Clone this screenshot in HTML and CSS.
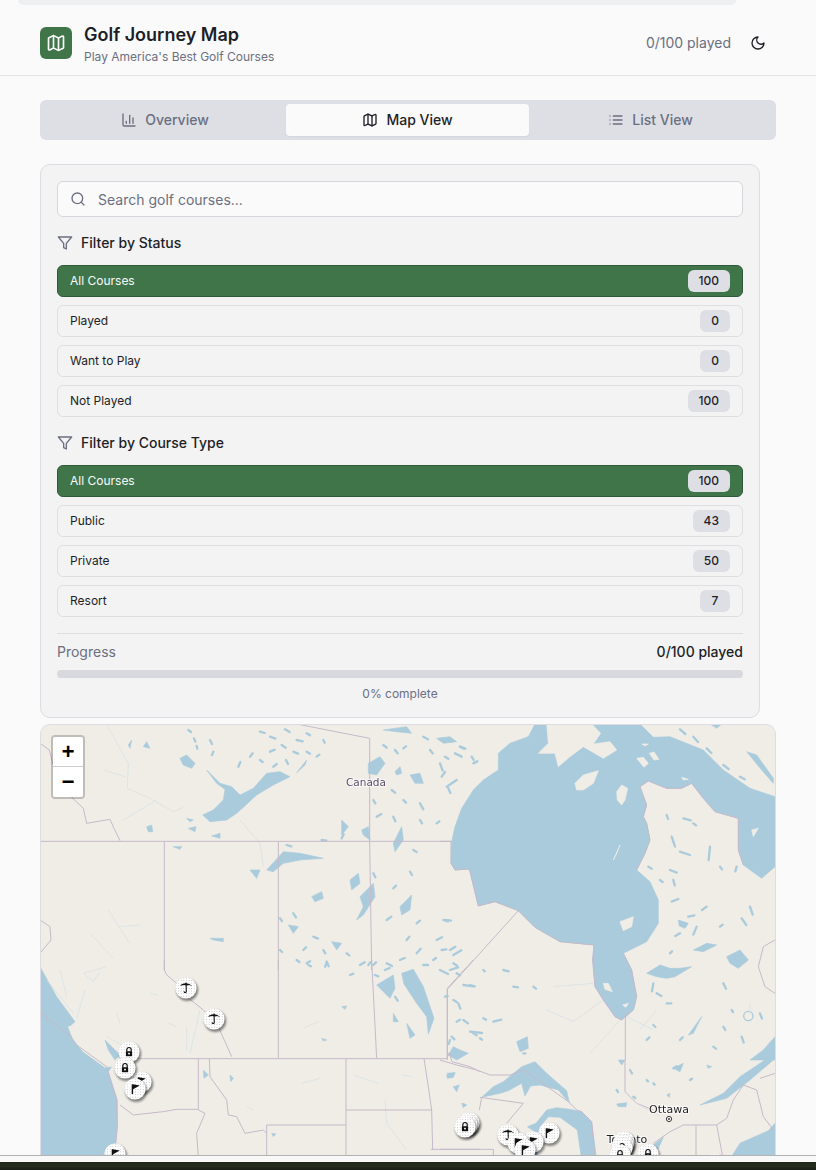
FILE: index.html
```html
<!DOCTYPE html>
<html>
  <head>
    <meta charset="UTF-8">
    <meta name="viewport" content="width=device-width,initial-scale=1">
    <title>Golf Journey Map</title>
    <link rel="stylesheet" href="styles.css">
  </head>
  <body>
    <svg class="defs" width="0" height="0">
      <symbol id="i-map" viewBox="0 0 24 24"><path d="M14.106 5.553a2 2 0 0 0 1.788 0l3.659-1.83A1 1 0 0 1 21 4.619v12.764a1 1 0 0 1-.553.894l-4.553 2.277a2 2 0 0 1-1.788 0l-4.212-2.106a2 2 0 0 0-1.788 0l-3.659 1.83A1 1 0 0 1 3 19.381V6.618a1 1 0 0 1 .553-.894l4.553-2.277a2 2 0 0 1 1.788 0z"/><path d="M15 5.764v15"/><path d="M9 3.236v15"/></symbol>
      <symbol id="i-moon" viewBox="0 0 24 24"><path d="M12 3a6 6 0 0 0 9 9 9 9 0 1 1-9-9Z"/></symbol>
      <symbol id="i-chart" viewBox="0 0 24 24"><path d="M3 3v16a2 2 0 0 0 2 2h16"/><path d="M18 17V9"/><path d="M13 17V5"/><path d="M8 17v-3"/></symbol>
      <symbol id="i-list" viewBox="0 0 24 24"><path d="M3 12h.01"/><path d="M3 18h.01"/><path d="M3 6h.01"/><path d="M8 12h13"/><path d="M8 18h13"/><path d="M8 6h13"/></symbol>
      <symbol id="i-search" viewBox="0 0 24 24"><circle cx="11" cy="11" r="8"/><path d="m21 21-4.3-4.3"/></symbol>
      <symbol id="i-filter" viewBox="0 0 24 24"><polygon points="22 3 2 3 10 12.46 10 19 14 21 14 12.46 22 3"/></symbol>
    </svg>

    <div class="topstrip"></div>

    <header class="header">
      <div class="brand">
        <div class="logo"><svg class="icon icon-20"><use href="#i-map"/></svg></div>
        <div>
          <h1>Golf Journey Map</h1>
          <p>Play America's Best Golf Courses</p>
        </div>
      </div>
      <div class="header-right">
        <span>0/100 played</span>
        <svg class="icon icon-16 dark"><use href="#i-moon"/></svg>
      </div>
    </header>

    <main class="main">
      <nav class="tabs">
        <div class="tab"><svg class="icon icon-16"><use href="#i-chart"/></svg><span>Overview</span></div>
        <div class="tab active"><svg class="icon icon-16"><use href="#i-map"/></svg><span>Map View</span></div>
        <div class="tab"><svg class="icon icon-16"><use href="#i-list"/></svg><span>List View</span></div>
      </nav>

      <section class="card">
        <div class="search">
          <svg class="icon icon-16"><use href="#i-search"/></svg>
          <span>Search golf courses...</span>
        </div>

        <div class="filter-title"><svg class="icon icon-16"><use href="#i-filter"/></svg><span>Filter by Status</span></div>
        <div class="filter-list">
          <div class="filter selected"><span>All Courses</span><b>100</b></div>
          <div class="filter"><span>Played</span><b>0</b></div>
          <div class="filter"><span>Want to Play</span><b>0</b></div>
          <div class="filter"><span>Not Played</span><b>100</b></div>
        </div>

        <div class="filter-title"><svg class="icon icon-16"><use href="#i-filter"/></svg><span>Filter by Course Type</span></div>
        <div class="filter-list">
          <div class="filter selected"><span>All Courses</span><b>100</b></div>
          <div class="filter"><span>Public</span><b>43</b></div>
          <div class="filter"><span>Private</span><b>50</b></div>
          <div class="filter"><span>Resort</span><b>7</b></div>
        </div>

        <div class="progress">
          <div class="progress-row"><span>Progress</span><strong>0/100 played</strong></div>
          <div class="bar"></div>
          <div class="percent">0% complete</div>
        </div>
      </section>

      <section class="map">
        <svg class="map-art" viewBox="41 725 734 446" width="734" height="446">
          <defs>
            <pattern id="dots" width="2.6" height="2.6" patternUnits="userSpaceOnUse">
              <rect width=".8" height=".8" fill="#b4b4b4"/>
            </pattern>
            <filter id="soft" x="-40%" y="-40%" width="180%" height="180%"><feGaussianBlur stdDeviation="1"/></filter>
            <g id="disc">
              <circle cx="1.2" cy="2" r="11" fill="#000" opacity=".45" filter="url(#soft)"/>
              <circle r="10.6" fill="#fff"/>
              <circle r="10.6" fill="url(#dots)"/>
            </g>
            <g id="m-lock">
              <use href="#disc"/>
              <path d="M-2.2-.6v-1.7a2.2 2.2 0 0 1 4.4 0v1.7" fill="none" stroke="#111" stroke-width="1.2"/>
              <rect x="-3.1" y="-.8" width="6.2" height="5" fill="#111"/>
              <rect x="-1" y=".8" width="2" height="1.6" fill="#ddd"/>
            </g>
            <g id="m-flag">
              <use href="#disc"/>
              <path d="M-2.6-4.6v9.6" stroke="#111" stroke-width="1.4"/>
              <path d="M-2.4-4.8 4.8-3.4-2.4.4z" fill="#111"/>
            </g>
            <g id="m-umb">
              <use href="#disc"/>
              <path d="M-6-2.2C-4-5.6 3-6 6.2-1.8L3.4-3 .8-2.4-1.8-3z" fill="#111"/>
              <path d="M0-5.4.3 3.2C.3 5-1.8 5-2 3.4" fill="none" stroke="#111" stroke-width="1.1"/>
            </g>
          </defs>

          <rect x="41" y="725" width="734" height="446" fill="#f0ede7"/>

          <!-- hudson bay and the east, coords from the 3x crop -->
          <g transform="translate(440 720) scale(.33333)">
            <path class="water" d="M285 12L265 50 210 70 175 100 175 150 130 180 100 210 65 265 45 320 35 365 33 430 45 450 88 447 115 558 165 545 235 572 285 622 360 665 462 675 458 720 465 800 490 840 525 890 545 900 580 870 590 830 575 750 550 700 620 665 655 610 655 540 630 485 590 450 615 400 630 360 620 310 610 290 620 255 600 200 625 183 680 205 725 205 755 190 790 235 825 275 895 295 895 390 910 435 965 475 1005 440 1005 230 930 205 850 150 790 90 690 50 640 52 600 12z"/>
            <path class="border" d="M33 365V430L45 450 88 447 115 558 165 545 235 572 285 622 360 665 462 675 458 720 465 800 490 840 525 890 545 900 580 870 590 830 575 750 550 700M590 450L615 400 630 360 620 310 610 290 620 255 600 200 625 183 680 205 725 205 755 190 790 235 825 275 895 295 895 390 910 435M0 364H33M235 572L22 808V1020M556 880V1020M1005 660L970 680 955 740 975 800 1005 820"/>
            <path class="land" d="M320 12L325 70 295 100 345 100 355 140 390 110 430 80 490 115 530 90 510 65 460 72 482 40 455 12zM405 190L430 165 475 152 460 190 430 210 410 210zM530 215L545 195 563 205 555 240 545 255 532 240zM590 115L610 112 625 130 612 142zM628 100L642 96 657 118 642 120zM605 72L625 72 615 78zM490 790L505 790 517 815 495 808zM935 330L955 325 940 350zM725 172L745 178 730 180zM548 855L565 850 558 862zM540 605L580 590 575 620 550 632zM520 420L540 375 530 400z"/>
            <path class="water" d="M920 95L950 105 1000 175V190L965 150zM810 12H845L830 25zM1005 950L1005 1020H930L970 990zM620 760L660 735 690 745 720 745 755 740 705 770 680 775 650 770zM760 690L800 670 830 675 790 695zM860 710L900 690 925 720 895 745 870 730zM715 600L745 610 735 625 718 618zM745 945L785 890 760 940zM230 965L262 950 265 985 240 995z"/>
            <path class="lakes" d="M680 285l4 12M695 350l10 30M730 295l22 6M720 395l30 10M760 310l8 6M810 380l-4 40M690 450l20 8M700 480l4 16M695 545l20-8M745 590l18-4M770 620l-10 24M890 440l-4 14M625 440l10 6M660 480l8 6M840 440l6 8M720 640l-14 8M850 790l8 16M800 560l-14 10M930 560l8 24M905 595l14 20M840 620l8-6M640 790l-4 24M650 820l14 8M680 850l14 0M620 960l8-8M640 915l6 6M720 960l8-8M850 920l6 10M905 950l6 18M960 880l6 16M875 870l4 6M820 980l8 6M690 700l6-6M15 600l18 2M5 690l14-2M30 750l24-8M40 705l24-14M190 750l16 4M70 795l30 4M130 750l4 4M160 905l24-6M90 935l36 4M120 955l6 4M280 800l8 6M220 800l14 2M50 905l10-6M15 830l8-2M30 960l-4 12M250 1000l6 0M20 200l30-20M0 130l8 22M45 100l20 10M100 130l12-6M60 80l16 6M20 60l14 4M130 895l8 4M720 28l16 14M760 50l14 16M800 85l14 14M850 135l16 12M900 170l14 8"/>
            <circle class="lake-ring" cx="925" cy="888" r="14"/>
            <path class="river" d="M320 870L400 905 490 840M340 800L460 790M540 900L450 1000M560 890L640 930M930 850V880M600 930L650 870"/>
          </g>

          <!-- prairie and northern lakes -->
          <g transform="translate(40 720) scale(.33333)">
            <path class="water" d="M500 150L530 190 555 208 550 240 520 270 488 285 510 305 560 300 590 280 612 260 650 225 700 195 750 170 720 155 680 160 640 205 600 225 575 200 540 190zM420 115L440 105 465 130 455 145 430 135zM985 130L1020 110 1035 130 1010 165 985 160zM1065 155L1080 140 1085 160 1070 165zM1110 165L1140 160 1150 190 1125 190zM1190 55L1230 50 1250 65 1210 70zM1030 30L1100 20 1115 40 1070 35zM680 450L730 395 780 400 850 415 780 420 730 430 700 455zM630 450L660 450 650 475zM960 530L1000 490 1005 530 970 585 950 600 970 560zM930 480L955 460 960 490 935 510zM815 530L845 515 850 535 825 545zM510 655L550 655 550 665 520 660zM745 615L775 620 760 640zM875 665L905 670 890 690zM310 80L320 65 330 85zM265 75L275 60 270 85zM320 320L335 315 338 335 325 335zM445 325L468 320 465 335zM515 348L540 340 540 355zM400 380L425 380 420 388zM440 295L460 300 450 305zM965 330L985 320 990 360 970 345zM1060 370L1085 320 1090 360 1065 395zM905 300L925 320 905 345zM1080 560L1115 525 1110 570 1085 585zM770 158L800 120 795 135z"/>
            <path class="lakes" d="M445 30l8 6M462 55l4 10M470 78l2 8M510 60l6 12M520 95l-4 10M595 140l6-14M630 110l8-10M660 35l14 4M690 50l16 6M735 28l14 8M770 60l18 4M800 40l10 6M690 95l14-6M725 75l12 8M760 95l14 6M800 95l10 6M830 110l8-6M660 120l8 6M700 140l10-8M738 120l6 12M850 60l4 8M1030 75l10 8M1065 90l8 10M1090 85l8-6M1150 50l14 8M1170 90l8 10M1215 110l10 6M1260 80l12 6M1295 110l6 10M1055 210l10 8M1090 240l8 8M1140 250l10 18M1205 170l10-14M1225 205l6 14M1010 290l14-8M1060 290l6 14M1140 300l6 10M1190 310l8-6M1000 240l6 10M1080 340l-10 30M1120 390l10 6M1110 455l6 10M740 375l14 4M845 360l14 2M905 355l6-12M760 580l8 12M720 595l6 8M820 650l14 6M790 690l8-8M850 690l6 10M770 720l8 6M720 690l6 6M800 730l10-6M860 725l6 14M920 700l8 6M960 735l14-8M1040 730l16 8M1080 720l14-6M1130 700l12-14M1180 720l8-6M1230 690l16-10M1130 610l10-8M1040 600l14-10M1190 660l16-8M1100 660l8-10M1060 505l8-8M1000 460l6 12M1210 600l14 4M1150 735l14 0"/>
            <path class="river" d="M200 15L265 130 262 205 330 235 400 275 430 262M190 150L255 170M205 570L240 625 270 670M240 620L300 615M150 640L220 715M600 300L660 370 670 440M350 240L250 300"/>
            <path class="border" d="M0 70L28 90 38 130 95 232 130 265 140 310 210 298 222 325 240 362M770 12L989 55V364L995 750M0 364H1235M373 364V750M715 364V750M0 600L30 620 33 660 0 700"/>
          </g>

          <!-- pacific coast and the border -->
          <g transform="translate(40 960) scale(.33333)">
            <path class="water" d="M0 20L50 110 105 185 88 200 130 220 215 320 205 335 232 420 232 500 222 600H0z"/>
            <path class="land" d="M85 200L115 197 170 255 222 318 195 322 130 275 100 240z"/>
            <path class="water" d="M1085 40L1120 28 1150 80 1182 175 1165 222 1160 170 1130 130 1092 72zM1100 190L1125 225 1110 235zM1010 75L1060 45 1065 85 1050 115 1030 95zM1260 270L1285 280 1250 300 1225 285 1240 260zM1220 345L1245 338 1240 352 1222 355zM1240 380L1258 375 1250 395zM1270 430L1280 435 1270 442zM905 140L920 138 915 148zM845 235L860 240 850 243zM570 345L580 355 572 365zM490 330L505 345 492 355zM1060 160L1075 185 1060 185zM695 520L708 522 700 530zM195 240L240 285 225 300 205 270z"/>
            <path class="lakes" d="M1005 45l10 4M1035 30l14-6M1065 110l8 12M1000 15l8-8M1200 30l24 12M1250 40l10 6M1290 75l14 4M1240 120l10 6M1270 180l14 10M1300 220l10 6M1235 230l8 8M1255 130l6 16M805 15l8 4M855 20l6-14M930 45l10-4M985 15l6-8M1240 10l12 8"/>
            <path class="river" d="M60 30L80 110M130 40L200 20M130 40L160 65 180 35M20 60L100 160M135 90L110 175M330 100L355 105M480 150L450 280M440 200L440 270M385 190L410 200M940 345L1015 370M1035 420L1040 490 1100 570M785 370L840 355M790 205L835 185M1085 345L1115 350M200 230L290 280M230 160L240 190M620 440L640 450"/>
            <path class="border" d="M373 0V30L380 45 410 70 440 110 490 150 530 190 555 245 575 290M715 0V295M995 0L1010 295M1300 0L1222 85V295M295 296H1220L1228 278 1236 305 1290 320 1320 335M0 158L60 205 90 225 110 255 200 320 205 340 230 420 232 500 222 600M475 296V450L495 460 470 520 475 590M508 296L510 350 560 420 565 465 590 470 615 520 670 510 680 520M680 495H918M680 495V590M918 296V590M918 450H1175M1152 296L1165 380 1175 450 1178 570M1172 568H1320M240 435L280 465 370 455 410 448H475"/>
          </g>

          <!-- great lakes and st lawrence -->
          <g transform="translate(440 1060) scale(.33333)">
            <path class="water" d="M125 112L160 80 190 65 245 20 285 5 320 40 380 92 388 128 355 90 300 75 272 78 255 108 245 70 205 92 180 100zM288 190L320 150 350 143 390 148 425 155 455 185 470 300H425L412 210 360 172 325 170 300 200 290 300H268L292 220 262 200zM600 300L640 255 670 232 640 300zM780 135L850 100 900 50 975 0H1000L930 60 860 115zM868 300L900 250 985 212 1005 190V300zM530 132L560 128 558 140 535 140zM20 40L45 38 35 52zM700 25L730 10 720 35zM800 15L815 20 805 25zM65 130L78 135 70 142zM680 105L690 100 688 112zM535 0H555L545 15z"/>
            <path class="border" d="M0 0L50 15 110 30 150 45 210 45 252 30 385 125 410 150 425 155 455 185 465 290M125 112L118 150M120 112L250 130 200 190M640 250L690 215 730 195H830L860 175 880 120 910 75 950 90 970 170 1000 210M1005 40L960 55M768 195V290M830 195L848 290M555 0V95L590 130 640 150M0 268H160V300"/>
            <path class="lakes" d="M570 30l6 10M620 60l4 4M700 25l10-6M530 90l4 6M580 110l6 4M640 70l4 4M750 60l6-4"/>
            <path class="river" d="M590 130L660 170"/>
          </g>

          <text class="label label-country" x="366" y="786">Canada</text>
          <text class="label label-city" x="669" y="1113">Ottawa</text>
          <text class="label label-city" x="627" y="1143">Toronto</text>
          <circle cx="669" cy="1119" r="2.6" fill="#fff" stroke="#222" stroke-width=".9"/>
          <circle cx="669" cy="1119" r=".9" fill="#222"/>

          <use href="#m-umb" x="186" y="988"/>
          <use href="#m-umb" x="214" y="1019"/>
          <use href="#m-lock" x="129" y="1052"/>
          <use href="#m-flag" x="141" y="1082"/>
          <use href="#m-lock" x="125" y="1068"/>
          <use href="#m-flag" x="135" y="1089"/>
          <use href="#m-flag" x="115" y="1154"/>
          <use href="#m-lock" x="469" y="1123"/>
          <use href="#m-lock" x="467" y="1125"/>
          <use href="#m-lock" x="465" y="1127"/>
          <use href="#m-umb" x="508" y="1135"/>
          <use href="#m-flag" x="549" y="1133"/>
          <use href="#m-flag" x="533" y="1142"/>
          <use href="#m-flag" x="518" y="1143"/>
          <use href="#m-flag" x="525" y="1150"/>
          <use href="#m-lock" x="624" y="1142"/>
          <use href="#m-lock" x="623" y="1145"/>
          <use href="#m-lock" x="622" y="1148"/>
          <use href="#m-lock" x="620" y="1155"/>
          <use href="#m-lock" x="648" y="1154"/>
          <use href="#m-lock" x="715" y="1164"/>
        </svg>

        <div class="zoom">
          <div class="zoom-btn">+</div>
          <div class="zoom-btn">−</div>
        </div>
      </section>
    </main>

    <div class="bottomstrip"></div>
  </body>
</html>
```

FILE: styles.css
```css
html, body {
  height: 1170px;
  overflow: hidden;
}
body {
  margin: 0;
  background-color: #fafafa;
  color: #1d1e26;
  font-family: Inter, 'Liberation Sans', sans-serif;
}
.defs {
  position: absolute;
}
.icon {
  fill: none;
  stroke: currentColor;
  stroke-width: 2;
  stroke-linecap: round;
  stroke-linejoin: round;
  flex: none;
}
.icon-16 {
  width: 16px;
  height: 16px;
}
.icon-20 {
  width: 20px;
  height: 20px;
}
.dark {
  color: #1d1e26;
}

.topstrip {
  height: 5px;
  width: 718px;
  margin-left: 18px;
  background-color: #eeeff1;
  border-radius: 0 0 6px 6px;
}
.header {
  height: 70px;
  box-sizing: content-box;
  padding: 0 50px 0 40px;
  border-bottom: 1px solid #e4e4e8;
  display: flex;
  align-items: center;
  justify-content: space-between;
}
.brand {
  display: flex;
  align-items: center;
  gap: 12px;
  padding-top: 6px;
}
.logo {
  width: 32px;
  height: 32px;
  border-radius: 6px;
  background-color: #40754a;
  color: #fafafa;
  display: flex;
  align-items: center;
  justify-content: center;
}
h1 {
  margin: 0;
  font-size: 18px;
  line-height: 28px;
  font-weight: 600;
}
.brand p {
  margin: 0;
  font-size: 12px;
  line-height: 16px;
  color: #6b6f80;
}
.header-right {
  display: flex;
  align-items: center;
  gap: 19px;
  font-size: 14px;
  color: #6b6f80;
  padding-top: 5px;
}

.main {
  padding: 24px 40px 0;
}
.tabs {
  display: grid;
  grid-template-columns: 242px 243px 243px;
  height: 40px;
  box-sizing: border-box;
  padding: 4px;
  margin-bottom: 24px;
  background-color: #dedfe5;
  border-radius: 6px;
}
.tab {
  display: flex;
  align-items: center;
  justify-content: center;
  gap: 8px;
  font-size: 14px;
  font-weight: 450;
  color: #6b6f80;
  border-radius: 4px;
}
.tab span, .filter span, .filter-title span {
  padding-bottom: 2px;
}
.tab.active {
  background-color: #fafafa;
  color: #1d1e26;
  box-shadow: 0 1px 2px #0000000d;
}

.card {
  width: 720px;
  height: 554px;
  box-sizing: border-box;
  padding: 16px;
  margin-bottom: 6px;
  background-color: #f3f3f4;
  border: 1px solid #dcdce2;
  border-radius: 10px;
}
.search {
  height: 36px;
  box-sizing: border-box;
  padding: 0 12px;
  display: flex;
  align-items: center;
  gap: 12px;
  font-size: 14px;
  color: #6b6f80;
  background-color: #fafafa;
  border: 1px solid #d6d6dd;
  border-radius: 6px;
}
.filter-title {
  display: flex;
  align-items: center;
  gap: 8px;
  height: 20px;
  margin: 16px 0 12px;
  font-size: 14px;
  font-weight: 450;
}
.filter-title .icon {
  color: #6b6f80;
}
.filter-list {
  display: flex;
  flex-direction: column;
  gap: 8px;
}
.filter {
  height: 32px;
  box-sizing: border-box;
  padding: 0 12px;
  display: flex;
  align-items: center;
  justify-content: space-between;
  font-size: 12px;
  font-weight: 400;
  border: 1px solid #dedee3;
  border-radius: 6px;
}
.filter.selected {
  background-color: #40754a;
  border-color: #2f5a39;
  color: #fafafa;
}
.filter b {
  min-width: 8px;
  height: 22px;
  padding: 0 11px;
  border-radius: 6px;
  background-color: #dedfe5;
  color: #1d1e26;
  font-weight: 500;
  line-height: 22px;
  text-align: center;
}
.progress {
  margin-top: 16px;
  padding-top: 8px;
  border-top: 1px solid #dedee3;
}
.progress-row {
  display: flex;
  justify-content: space-between;
  font-size: 14px;
  line-height: 20px;
  color: #6b6f80;
}
.progress-row strong {
  font-weight: 450;
  color: #1d1e26;
}
.bar {
  height: 8px;
  margin-top: 8px;
  border-radius: 4px;
  background-color: #d8d9df;
}
.percent {
  margin-top: 8px;
  font-size: 12px;
  line-height: 16px;
  text-align: center;
  color: #6b6f80;
}

.map {
  position: relative;
  width: 734px;
  height: 446px;
  overflow: hidden;
  background-color: #f0ede7;
  border: 1px solid #dcdce2;
  border-radius: 10px 10px 0 0;
}
.map-art {
  display: block;
  filter: blur(.35px);
}
.water {
  fill: #aacbdc;
  stroke: #aacbdc;
  stroke-width: 2;
  stroke-linejoin: round;
}
.land {
  fill: #f0ede7;
  stroke: #f0ede7;
  stroke-width: 2;
  stroke-linejoin: round;
}
.lakes {
  fill: none;
  stroke: #aacbdc;
  stroke-width: 7;
  stroke-linecap: round;
}
.border {
  fill: none;
  stroke: #c6b9c9;
  stroke-width: 3;
}
.river {
  fill: none;
  stroke: #d3e1e5;
  stroke-width: 2.2;
}
.lake-ring {
  fill: none;
  stroke: #aacbdc;
  stroke-width: 4;
}
.label {
  text-anchor: middle;
  font-family: 'DejaVu Sans', sans-serif;
  paint-order: stroke;
  stroke: #fff;
  stroke-width: 2px;
  stroke-opacity: .7;
}
.label-country {
  font-size: 10.5px;
  fill: #5c4a6b;
}
.label-city {
  font-size: 11px;
  fill: #222;
}
.zoom {
  position: absolute;
  top: 10px;
  left: 10px;
  border: 2px solid #00000033;
  border-radius: 4px;
  background-clip: padding-box;
}
.zoom-btn {
  width: 30px;
  height: 30px;
  box-sizing: border-box;
  overflow: hidden;
  background-color: #fff;
  color: #000;
  font: bold 22px/34px 'Liberation Mono', monospace;
  text-align: center;
}
.zoom-btn:first-child {
  border-bottom: 1px solid #ccc;
  border-radius: 2px 2px 0 0;
}
.zoom-btn:last-child {
  line-height: 33px;
  border-radius: 0 0 2px 2px;
}

.bottomstrip {
  position: fixed;
  left: 0;
  right: 0;
  bottom: 0;
  height: 14px;
  border-top: 1px solid #b2b2b2;
  background: linear-gradient(#f8f8f8 6px, #1e2618 6px, #252e1e 10px, #181d13);
}
```
